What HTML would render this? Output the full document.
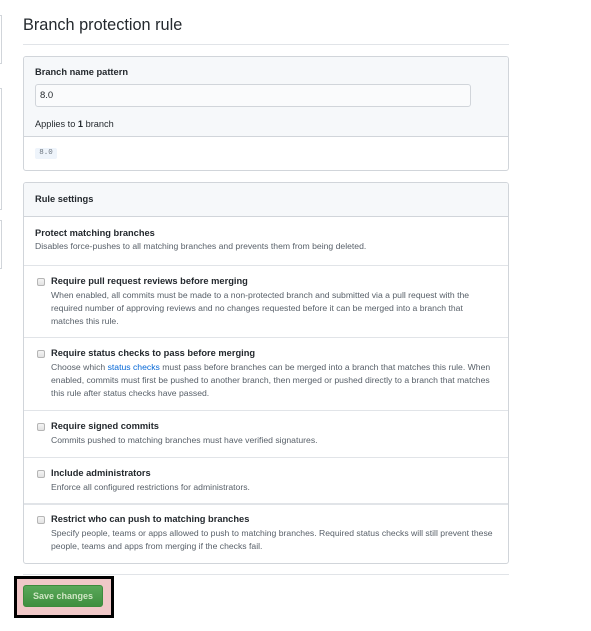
<!DOCTYPE html>
<html><head><meta charset="utf-8"><style>
*{box-sizing:border-box;margin:0;padding:0}
body{width:591px;height:631px;background:#fff;font-family:"Liberation Sans",Arial,sans-serif;color:#24292e;position:relative;overflow:hidden}
.a{position:absolute}
.t{font-size:9.3px;font-weight:bold;color:#24292e;white-space:nowrap}
.d{font-size:8.65px;color:#586069;line-height:13px;white-space:nowrap}
.cb{position:absolute;left:37px;width:8px;height:8px;border:1px solid #b5b5b5;border-radius:2px;background:linear-gradient(#f4f4f4,#e2e2e2)}
.hl{position:absolute;left:24px;width:484px;height:1px;background:#e1e4e8}
.sb{position:absolute;left:0;width:2px;border:1px solid #d1d5da;border-left:none}
</style></head><body>
<div class="sb" style="top:15px;height:49px"></div>
<div class="sb" style="top:88px;height:122px"></div>
<div class="sb" style="top:220px;height:49px"></div>

<div class="a" style="left:23px;top:16px;font-size:16.3px;color:#24292e">Branch protection rule</div>
<div class="a" style="left:23px;top:44px;width:486px;height:1px;background:#e1e4e8"></div>

<div class="a" style="left:23px;top:56px;width:486px;height:115px;border:1px solid #d1d5da;border-radius:3px;background:#fff;overflow:hidden">
 <div class="a" style="left:0;top:0;width:484px;height:80px;background:#f6f8fa;border-bottom:1px solid #d1d5da"></div>
</div>
<div class="a t" style="left:35px;top:67px">Branch name pattern</div>
<div class="a" style="left:35px;top:84px;width:436px;height:23px;border:1px solid #d1d5da;border-radius:3px;background:#fafbfc;font-size:9.5px;padding:5px 4px;color:#24292e">8.0</div>
<div class="a" style="left:35px;top:119px;font-size:9.2px;color:#24292e">Applies to <b>1</b> branch</div>
<div class="a" style="left:35px;top:148px;width:22px;height:11px;background:#eef4fb;border-radius:2px;font-family:'Liberation Mono',monospace;font-size:7.5px;color:#6a737d;padding:1px 2px;text-align:center">8.0</div>

<div class="a" style="left:23px;top:182px;width:486px;height:382px;border:1px solid #d1d5da;border-radius:3px;background:#fff;overflow:hidden">
 <div class="a" style="left:0;top:0;width:484px;height:34px;background:#f6f8fa;border-bottom:1px solid #d1d5da"></div>
</div>
<div class="a t" style="left:35px;top:194px">Rule settings</div>

<div class="a t" style="left:35px;top:228px">Protect matching branches</div>
<div class="a d" style="left:35px;top:240px">Disables force-pushes to all matching branches and prevents them from being deleted.</div>
<div class="hl" style="top:265px"></div>

<div class="cb" style="top:278px"></div>
<div class="a t" style="left:51px;top:276px">Require pull request reviews before merging</div>
<div class="a d" style="left:51px;top:289px">When enabled, all commits must be made to a non-protected branch and submitted via a pull request with the<br>required number of approving reviews and no changes requested before it can be merged into a branch that<br>matches this rule.</div>
<div class="hl" style="top:337px"></div>

<div class="cb" style="top:350px"></div>
<div class="a t" style="left:51px;top:348px">Require status checks to pass before merging</div>
<div class="a d" style="left:51px;top:361px">Choose which <span style="color:#0366d6">status checks</span> must pass before branches can be merged into a branch that matches this rule. When<br>enabled, commits must first be pushed to another branch, then merged or pushed directly to a branch that matches<br>this rule after status checks have passed.</div>
<div class="hl" style="top:410px"></div>

<div class="cb" style="top:423px"></div>
<div class="a t" style="left:51px;top:421px">Require signed commits</div>
<div class="a d" style="left:51px;top:434px">Commits pushed to matching branches must have verified signatures.</div>
<div class="hl" style="top:457px"></div>

<div class="cb" style="top:470px"></div>
<div class="a t" style="left:51px;top:468px">Include administrators</div>
<div class="a d" style="left:51px;top:481px">Enforce all configured restrictions for administrators.</div>
<div class="hl" style="top:503px;height:2px"></div>

<div class="cb" style="top:516px"></div>
<div class="a t" style="left:51px;top:514px">Restrict who can push to matching branches</div>
<div class="a d" style="left:51px;top:527px">Specify people, teams or apps allowed to push to matching branches. Required status checks will still prevent these<br>people, teams and apps from merging if the checks fail.</div>

<div class="a" style="left:23px;top:574px;width:486px;height:1px;background:#e1e4e8"></div>

<div class="a" style="left:14px;top:576px;width:100px;height:42px;border:3px solid #000;background:#f0c8c8"></div>
<div class="a" style="left:23px;top:585px;width:80px;height:22px;border:1px solid #3d8b3d;border-radius:3px;background:linear-gradient(#5aa85a,#3f8f3f);color:#cfe6c4;font-size:9px;font-weight:bold;text-align:center;line-height:20px">Save changes</div>
</body></html>
